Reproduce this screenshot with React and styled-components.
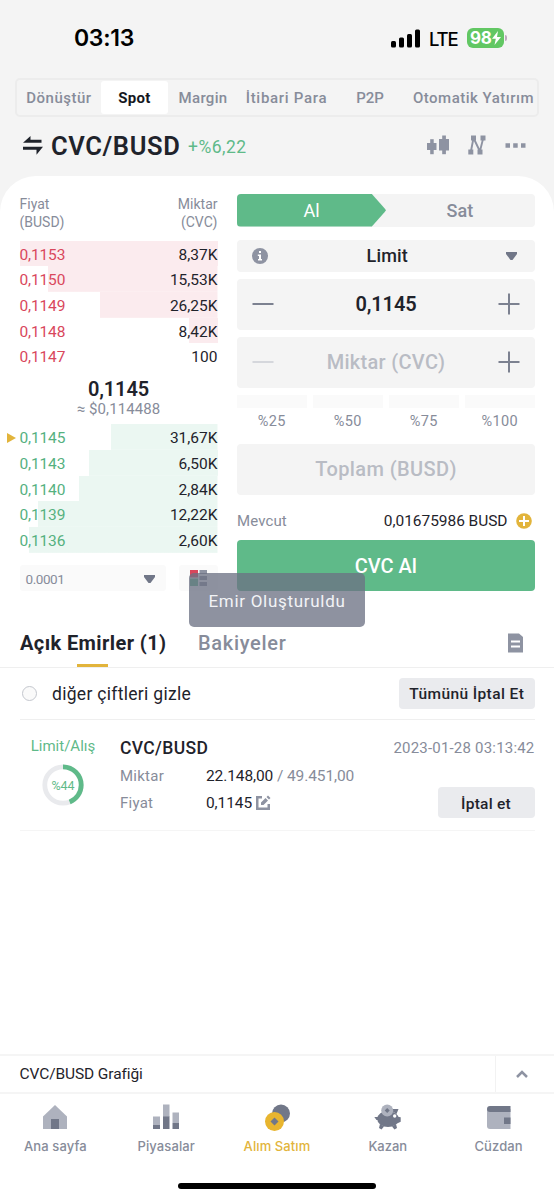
import React from "react";
import styled, { createGlobalStyle } from "styled-components";

const c = {
  ink: "#1f232b",
  grey: "#878c9a",
  icon: "#8e93a2",
  dark: "#717788",
  faint: "#b9bcc4",
  green: "#5fba89",
  red: "#d9475c",
  gold: "#e2b43b",
  field: "#f4f4f4",
  pale: "#fafafa",
  line: "#efefef",
};

const Global = createGlobalStyle`
  * { box-sizing: border-box; }
  body { margin: 0; background: #f4f4f4; font-family: Roboto, "Liberation Sans", sans-serif; color: ${c.ink}; }
  button { font: inherit; color: inherit; border: 0; padding: 0; background: none; }
  svg { display: block; flex: none; }
`;

const Screen = styled.div`
  width: 554px; height: 1200px; overflow: hidden; position: relative;
  display: flex; flex-direction: column; background: #f4f4f4;
`;

const Text = styled.span`
  font-size: ${(p) => p.$size || 15}px;
  font-weight: ${(p) => p.$weight || 400};
  color: ${(p) => p.$color || c.ink};
  letter-spacing: ${(p) => p.$ls || 0}px;
  white-space: nowrap;
`;

/* Status bar */
const StatusBar = styled.header`
  height: 78px; flex: none; padding: 0 47px 2px 74px;
  display: flex; align-items: center; justify-content: space-between;
  font-family: Inter, sans-serif; color: #000;
`;
const Clock = styled.span`font-size: 23px; font-weight: 600; letter-spacing: -0.3px;`;
const StatusRight = styled.div`display: flex; align-items: center;`;
const Network = styled.span`font-size: 18.5px; font-weight: 500; letter-spacing: -1.2px; margin: 1px 10px 0 9px; width: 28px;`;
const Battery = styled.div`
  width: 37px; height: 20px; border-radius: 6px; background: #62c763; color: #fff;
  display: flex; align-items: center; padding-left: 3px;
  font-size: 17px; font-weight: 700; letter-spacing: -0.2px;
`;
const BatteryCap = styled.span`width: 2px; height: 6px; margin-left: 1px; border-radius: 0 2px 2px 0; background: #bda9bd;`;

/* Market tabs */
const Tabs = styled.nav`
  margin: 0 15px; height: 39px; flex: none; border: 2px solid #ececec; border-radius: 5px;
  display: flex; align-items: center; padding: 1px 0; overflow: hidden;
`;
const Tab = styled.button`
  width: ${(p) => p.$w}px; height: 33px; flex: none; border-radius: 3px; text-align: center;
  background: ${(p) => (p.$on ? "#fff" : "transparent")};
  color: ${(p) => (p.$on ? "#15181e" : c.grey)};
  font-size: 15px; font-weight: ${(p) => (p.$on ? 700 : 500)}; letter-spacing: ${(p) => p.$ls || 0}px; white-space: nowrap;
  padding: 1px 0 0;
`;

const PairBar = styled.div`
  height: 59px; flex: none; padding: 0 28px 3px 23px; display: flex; align-items: center;
`;
const Pair = styled.h1`margin: 1px 0 0 8px; width: 137px; font-size: 25.5px; line-height: 30px; font-weight: 600; letter-spacing: 0.6px;`;
const Change = styled(Text)`padding-top: 4px;`;
const Tools = styled.div`margin-left: auto; display: flex; align-items: center; gap: 19px;`;

/* Content card */
const Card = styled.main`
  flex: 1; min-height: 0; background: #fff; border-radius: 36px 36px 0 0;
  display: flex; flex-direction: column;
`;
const Trade = styled.section`
  height: 442px; flex: none; padding: 18px 19.5px 0; display: grid; grid-template-columns: 198px 297.5px; column-gap: 19.5px; align-items: start;
`;
const Column = styled.div`display: flex; flex-direction: column; min-width: 0;`;

const BookHead = styled.div`
  display: flex; justify-content: space-between; height: 46.5px; padding-top: 0.5px;
  font-size: 14px; line-height: 18px; color: ${c.grey}; letter-spacing: 0;
  div:last-child { text-align: right; }
`;
const Level = styled.div`
  height: 25.72px; display: flex; align-items: center; justify-content: space-between; position: relative;
  background: linear-gradient(${(p) => p.$tint}, ${(p) => p.$tint}) right / ${(p) => p.$fill}px 100% no-repeat;
  padding-top: 2.5px;
`;
const Marker = styled.i`
  position: absolute; left: -13px; top: 8.5px; border-left: 9px solid ${c.gold};
  border-top: 5px solid transparent; border-bottom: 5px solid transparent;
`;
const Last = styled.div`
  height: 55px; display: flex; flex-direction: column; align-items: center; padding-top: 7.5px;
  line-height: 24px;
  span:last-child { line-height: 16px; }
`;
const BookFoot = styled.div`display: flex; gap: 13px; margin-top: 12px;`;
const Step = styled.div`
  width: 146.5px; height: 26px; background: ${c.pale}; border-radius: 3px; padding: 2px 11px 0 6px;
  display: flex; align-items: center; justify-content: space-between;
`;
const ViewMode = styled.div`width: 38.5px; height: 26px; background: ${c.pale}; border-radius: 3px; padding: 4px 0 0 11px;`;

/* Order form */
const Side = styled.div`
  height: 32.5px; border-radius: 4px; background: ${c.field}; display: flex; overflow: hidden; align-items: center;
`;
const Buy = styled.button`
  width: 149px; height: 32.5px; background: ${c.green}; color: #fff; font-size: 18px;
  clip-path: polygon(0 0, 90.5% 0, 99% 44%, 100% 50%, 99% 56%, 90.5% 100%, 0 100%);
`;
const Sell = styled.button`width: 148px; font-size: 18px; font-weight: 500; color: ${c.grey}; letter-spacing: 0.1px;`;
const Field = styled.div`
  height: ${(p) => p.$h || 51.5}px; margin-top: ${(p) => p.$mt || 6.5}px; border-radius: 4px; background: ${c.field};
  display: flex; align-items: center; justify-content: ${(p) => (p.$center ? "center" : "space-between")};
  padding: ${(p) => (p.$select ? "0 17px 0 15px" : "0 14.5px 0 15px")};
`;
const Percents = styled.div`display: grid; grid-template-columns: repeat(4, 1fr); gap: 6.5px; margin-top: 6.5px; height: 49px;`;
const Percent = styled.div`
  display: flex; flex-direction: column; align-items: center; gap: 5px;
  &::before { content: ""; width: 100%; height: 13px; background: ${c.pale}; }
`;
const Balance = styled.div`
  height: 45px; display: flex; align-items: center; padding: 7px 3px 0 0;
  span:first-child { margin-right: auto; }
  svg { margin-left: 8px; }
`;
const Submit = styled.button`
  height: 51px; border-radius: 4px; background: ${c.green}; color: #fff; font-size: 20px; font-weight: 500; letter-spacing: 0;
`;

/* Open orders */
const OrderTabs = styled.div`
  height: 50px; flex: none; border-bottom: 1.5px solid ${c.line}; padding: 0 31px 0 20px; display: flex; align-items: stretch;
`;
const OrderTab = styled.button`
  position: relative; width: ${(p) => p.$w}px; margin-right: 32px; text-align: left; white-space: nowrap;
  font-size: 20px; font-weight: ${(p) => (p.$on ? 700 : 500)}; letter-spacing: ${(p) => p.$ls}px;
  color: ${(p) => (p.$on ? c.ink : c.grey)};
  &::after {
    content: ""; display: ${(p) => (p.$on ? "block" : "none")}; position: absolute; left: 57px; bottom: 0;
    width: 31px; height: 3px; background: ${c.gold};
  }
`;
const Doc = styled.div`margin-left: auto; display: flex; align-items: center;`;
const Filter = styled.div`
  margin: 0 19.5px; height: 51.5px; flex: none; border-bottom: 1.5px solid ${c.line}; display: flex; align-items: center;
`;
const FilterLabel = styled(Text)`padding-top: 2px;`;
const Radio = styled.i`width: 15px; height: 15px; margin: 1px 15.5px 0 2px; border: 1.2px solid #c4c7ce; border-radius: 50%; background: #fafafa;`;
const Chip = styled.button`
  margin-left: auto; width: ${(p) => p.$w}px; height: 31px; border-radius: 4px; background: #eaebee;
  padding-top: 2px; font-size: 15.5px; font-weight: 500; letter-spacing: ${(p) => p.$ls}px; white-space: nowrap;
`;
const Order = styled.article`
  margin: 0 19.5px; height: 111px; flex: none; border-bottom: 1.5px solid #f5f5f5;
  display: grid; grid-template-columns: 100.5px 1fr; align-items: start;
`;
const Progress = styled.div`
  width: 87px; display: flex; flex-direction: column; align-items: center; padding-top: 17px; gap: 9px;
`;
const Details = styled.div`display: flex; flex-direction: column; padding-top: 14.5px;`;
const Line = styled.div`
  display: flex; align-items: center; height: ${(p) => p.$h}px; flex: none;
  > svg { margin-left: 4px; }
`;
const Label = styled.span`width: 86px; font-size: 15px; color: ${c.grey}; letter-spacing: 0.25px;`;
const End = styled.span`margin-left: auto; display: flex;`;

/* Footer */
const ChartBar = styled.div`
  margin-top: auto; height: 39.5px; flex: none; border-top: 2px solid #f5f5f5; border-bottom: 2px solid #f5f5f5;
  display: flex; align-items: center; padding-left: 19.5px;
`;
const Expand = styled.div`
  margin-left: auto; width: 59px; height: 100%; border-left: 1px solid #f2f2f2; display: flex; align-items: center; justify-content: center; padding-right: 7px;
`;
const BottomNav = styled.nav`height: 89.5px; flex: none; display: flex; padding-top: 10.5px; font-family: Inter, sans-serif;`;
const NavItem = styled.a`
  flex: 1; display: flex; flex-direction: column; align-items: center; gap: 7px;
  font-size: 13px; line-height: 18px; font-weight: 500; letter-spacing: ${(p) => p.$ls}px; color: ${(p) => (p.$on ? c.gold : c.grey)};
`;
const NavIcon = styled.span`height: 26px; display: block; svg { overflow: visible; }`;
const HomeBar = styled.div`height: 17px; flex: none; &::before { content: ""; display: block; width: 198px; height: 6px; margin: 0 auto; border-radius: 3px; background: #000; }`;

const Toast = styled.div`
  position: absolute; left: 189px; top: 573px; width: 176px; height: 54px; border-radius: 5px;
  background: rgba(108, 113, 131, 0.77); color: #f2f3f6; display: flex; align-items: center; justify-content: center;
  font-size: 17px; letter-spacing: 0.7px; padding-top: 1px;
`;

const Caret = () => (
  <svg width="11" height="8" viewBox="0 0 11 8" fill={c.dark}><path d="M0 0h11v2L6.500 8h-2L0 2z" /></svg>
);
const Minus = ({ faint }) => (
  <svg width="22" height="22" viewBox="0 0 22 22" fill={faint ? "#d5d7dc" : "#7c8190"}><path d="M.5 10h21v2H.5z" /></svg>
);
const Plus = () => (
  <svg width="22" height="22" viewBox="0 0 22 22" fill="#7c8190"><path d="M.5 10h21v2H.5z" /><path d="M10 .5h2v21h-2z" /></svg>
);

const asks = [["0,1153", "8,37K", 198], ["0,1150", "15,53K", 169.5], ["0,1149", "26,25K", 117.5], ["0,1148", "8,42K", 29], ["0,1147", "100", 0]];
const bids = [["0,1145", "31,67K", 106.5], ["0,1143", "6,50K", 129], ["0,1140", "2,84K", 138.5], ["0,1139", "12,22K", 179.5], ["0,1136", "2,60K", 188.5]];

const Levels = ({ rows, tint, color, marked }) =>
  rows.map(([price, amount, fill], i) => (
    <Level key={price} $tint={tint} $fill={fill}>
      {marked && i === 0 && <Marker />}
      <Text $color={color} $size={15.5} $ls={-0.15}>{price}</Text>
      <Text $size={15.5}>{amount}</Text>
    </Level>
  ));

const SwapIcon = () => (
  <svg width="20" height="19" viewBox="0 0 20 19" fill={c.ink}><path d="M0 6.700 7.500 0v3.700H18.500v3zM20 10.700 13.500 18.700v-5H0v-3z" /></svg>
);
const CandleIcon = () => (
  <svg width="22" height="20" viewBox="0 0 22 20" fill={c.icon}>
    <rect y="8" width="9.500" height="7" /><rect x="3.200" y="4.200" width="3.500" height="15" />
    <rect x="12" y="4" width="10" height="11.500" /><rect x="15.200" y=".5" width="3.700" height="18.700" />
  </svg>
);
const NodeIcon = () => (
  <svg width="18" height="20" viewBox="0 0 18 20" fill={c.icon}>
    <path d="M3 .5h5v5H3zM12.500.5h5v5h-5zM.3 14.500h5v5h-5zM9.500 14.500h5v5h-5z" />
    <path d="M5.300 4 3 16M6 4l6 12.500M15 4l-3 12" fill="none" stroke={c.icon} strokeWidth="1.900" />
  </svg>
);
const DotsIcon = () => (
  <svg width="21" height="5" viewBox="0 0 21 5" fill={c.icon}><path d="M.5.3h4.500v4.400H.5zM8.200.3h4.500v4.400H8.200zM16 .3h4.500v4.400H16z" /></svg>
);
const Ring = () => (
  <svg width="42" height="42" viewBox="0 0 42 42">
    <circle cx="21" cy="21" r="18.200" fill="none" stroke="#e9eaed" strokeWidth="4.800" />
    <circle cx="21" cy="21" r="18.200" fill="none" stroke={c.green} strokeWidth="4.800" pathLength="100" strokeDasharray="44 56" transform="rotate(-90 21 21)" />
    <text x="21" y="26" textAnchor="middle" fontSize="12.500" letterSpacing="-0.1" fill={c.green}>%44</text>
  </svg>
);

const navIcons = {
  home: <svg width="24" height="26" viewBox="0 0 24 26"><path fill="#aeb2be" d="M12 1 24 12.500V25H0V12.500z" /><path fill={c.dark} d="M8 15h8v10H8z" /></svg>,
  bars: <svg width="26" height="26" viewBox="0 0 26 26"><path fill="#aeb2be" d="M0 12.500h7v9H0zM10 .5h6.500V13H10zM19.500 8.500H26V19h-6.500z" /><path fill={c.dark} d="M0 21h7v4H0zM10 12.500h6.500V25H10zM19.500 19H26v6h-6.500z" /></svg>,
  trade: <svg width="26" height="26" viewBox="0 0 26 26"><circle cx="17" cy="9.500" r="9" fill={c.dark} /><circle cx="10.500" cy="17.500" r="9.500" fill="#e8b52f" /><path fill={c.dark} d="m10.500 13.500 4 4-4 4-4-4z" /></svg>,
  pig: (
    <svg width="27" height="26" viewBox="0 0 27 26">
      <ellipse cx="14" cy="15" rx="10.800" ry="8" fill={c.dark} />
      <path fill={c.dark} d="M15 5h9.500L22.500 10zM22 12.500l4.700.8v4.500L22 20zM.3 13h4v3H2.500zM6 20l4 2.500-2.500 3L5 24zM22 20l-4 2.500 2.500 3L23 24z" />
      <circle cx="20.700" cy="12" r="1.700" fill="#fff" />
      <circle cx="13.200" cy="6.500" r="6" fill="#aeb2be" />
      <path fill={c.dark} d="m13.200 4 2.500 2.500-2.500 2.500-2.500-2.500z" />
    </svg>
  ),
  wallet: <svg width="24" height="26" viewBox="0 0 24 26"><path fill="#aeb2be" d="M0 5h23.500v20H3q-3 0-3-3z" /><path fill={c.dark} d="M23.500 2H3Q0 2 0 5t3 3h20.500zM17 13.500h6.500v6.500H17z" /></svg>,
};
const nav = [["home", "Ana sayfa", 0.1], ["bars", "Piyasalar", 0.1], ["trade", "Alım Satım", 0.1], ["pig", "Kazan", 0], ["wallet", "Cüzdan", 0.1]];

export default function App() {
  return (
    <Screen>
      <Global />
      <StatusBar>
        <Clock>03:13</Clock>
        <StatusRight>
          <svg width="29" height="19" viewBox="0 0 29 19"><rect y="12" width="5" height="6.500" rx="1.500" /><rect x="8" y="8.500" width="5" height="10" rx="1.500" /><rect x="16" y="5" width="5" height="13.500" rx="1.500" /><rect x="24" y=".5" width="5" height="18" rx="1.500" /></svg>
          <Network>LTE</Network>
          <Battery>98<svg width="9" height="14" viewBox="0 0 9 14" fill="#fff"><path d="M6 0 0 7.800h3.800L2.500 14 9 6H5z" /></svg></Battery>
          <BatteryCap />
        </StatusRight>
      </StatusBar>

      <Tabs>
        <Tab $w={84} $ls={0.5}>Dönüştür</Tab>
        <Tab $w={67} $on $ls={0.3}>Spot</Tab>
        <Tab $w={70} $ls={0.3}>Margin</Tab>
        <Tab $w={97} $ls={0.7}>İtibari Para</Tab>
        <Tab $w={70}>P2P</Tab>
        <Tab $w={137} $ls={0.5}>Otomatik Yatırım</Tab>
      </Tabs>

      <PairBar>
        <SwapIcon />
        <Pair>CVC/BUSD</Pair>
        <Change $size={17.5} $color={c.green} $ls={0.5}>+%6,22</Change>
        <Tools><CandleIcon /><NodeIcon /><DotsIcon /></Tools>
      </PairBar>

      <Card>
        <Trade>
          <Column>
            <BookHead><div>Fiyat<br />(BUSD)</div><div>Miktar<br />(CVC)</div></BookHead>
            <Levels rows={asks} tint="#fbebee" color={c.red} />
            <Last>
              <Text $size={20} $weight={600} $ls={-0.1}>0,1145</Text>
              <Text $size={15} $color={c.grey} $ls={0.1}>≈ $0,114488</Text>
            </Last>
            <Levels rows={bids} tint="#ebf7f2" color="#55b17f" marked />
            <BookFoot>
              <Step><Text $size={13.5} $color={c.grey} $ls={-0.45}>0.0001</Text><Caret /></Step>
              <ViewMode>
                <svg width="17" height="18" viewBox="0 0 17 18"><path fill={c.red} d="M0 1h8v7.500H0z" /><path fill={c.green} d="M0 9.500h8V17H0z" /><path fill={c.icon} d="M9.500 1H17v4H9.500zM9.500 7H17v4H9.500zM9.500 13H17v4H9.500z" /></svg>
              </ViewMode>
            </BookFoot>
          </Column>

          <Column>
            <Side><Buy>Al</Buy><Sell>Sat</Sell></Side>
            <Field $select $h={32.5} $mt={13}>
              <svg width="16" height="16" viewBox="0 0 16 16"><circle cx="8" cy="8" r="8" fill={c.icon} /><path fill="#fff" d="M7 3h2v2H7zM5.800 6.500H9V11h1v1.500H6V11h1V8H5.800z" /></svg>
              <Text $size={18} $weight={500} $ls={0.15}>Limit</Text>
              <Caret />
            </Field>
            <Field><Minus /><Text $size={20} $weight={600} $ls={-0.1}>0,1145</Text><Plus /></Field>
            <Field><Minus faint /><Text $size={20} $ls={0.3} $weight={500} $color={c.faint}>Miktar (CVC)</Text><Plus /></Field>
            <Percents>{["%25", "%50", "%75", "%100"].map((v) => <Percent key={v}><Text $size={14.5} $color={c.grey} $ls={0.3}>{v}</Text></Percent>)}</Percents>
            <Field $center $mt={0.1}><Text $size={20} $ls={0.4} $weight={500} $color={c.faint}>Toplam (BUSD)</Text></Field>
            <Balance>
              <Text $size={15} $color={c.grey} $ls={0.1}>Mevcut</Text>
              <Text $size={15.5} $ls={-0.05}>0,01675986 BUSD</Text>
              <svg width="16" height="16" viewBox="0 0 16 16"><circle cx="8" cy="8" r="7.800" fill={c.gold} /><path fill="#fff" d="M7 3h2v4h4v2H9v4H7V9H3V7h4z" /></svg>
            </Balance>
            <Submit>CVC Al</Submit>
          </Column>
        </Trade>

        <OrderTabs>
          <OrderTab $on $w={146} $ls={0.4}>Açık Emirler (1)</OrderTab>
          <OrderTab $w={90} $ls={0.7}>Bakiyeler</OrderTab>
          <Doc><svg width="15" height="20" viewBox="0 0 15 20"><path fill={c.icon} d="M0 .5h11L15 4v15.500H0z" /><path fill="#fff" d="M3 7.500h9v2H3zM3 12.500h9v2H3z" /></svg></Doc>
        </OrderTabs>
        <Filter>
          <Radio />
          <FilterLabel $size={17.5} $ls={0.3}>diğer çiftleri gizle</FilterLabel>
          <Chip $w={135.5} $ls={0.4}>Tümünü İptal Et</Chip>
        </Filter>
        <Order>
          <Progress><Text $size={15} $color={c.green}>Limit/Alış</Text><Ring /></Progress>
          <Details>
            <Line $h={28}><Text $size={17.5} $weight={500} $ls={0.35}>CVC/BUSD</Text><End><Text $size={15} $color={c.grey} $ls={0.2}>2023-01-28 03:13:42</Text></End></Line>
            <Line $h={28}><Label>Miktar</Label><Text $size={15.5} $ls={-0.1}>22.148,00 <Text $size={15.5} $color={c.grey} $ls={-0.1}>/ 49.451,00</Text></Text></Line>
            <Line $h={25}>
              <Label>Fiyat</Label><Text $size={15.5} $ls={-0.1}>0,1145</Text>
              <svg width="15" height="15" viewBox="0 0 15 15" fill={c.icon}><path d="M0 1h6v2.500H2.500v9h9V9H14v6H0z" /><path d="m5 7.500 4.500-4.500L12 5.500 7.500 10H5zM10.500 2 12 .5 14.500 3 13 4.500z" /></svg>
              <End><Chip $w={97} $ls={0.25}>İptal et</Chip></End>
            </Line>
          </Details>
        </Order>

        <ChartBar>
          <Text $size={15.5} $ls={-0.1}>CVC/BUSD Grafiği</Text>
          <Expand><svg width="12" height="8" viewBox="0 0 12 8" fill="none" stroke={c.icon} strokeWidth="2.500"><path d="m1 7 5-5 5 5" /></svg></Expand>
        </ChartBar>
        <BottomNav>
          {nav.map(([icon, label, ls]) => <NavItem key={icon} $on={icon === "trade"} $ls={ls}><NavIcon>{navIcons[icon]}</NavIcon>{label}</NavItem>)}
        </BottomNav>
        <HomeBar />
      </Card>
      <Toast>Emir Oluşturuldu</Toast>
    </Screen>
  );
}
